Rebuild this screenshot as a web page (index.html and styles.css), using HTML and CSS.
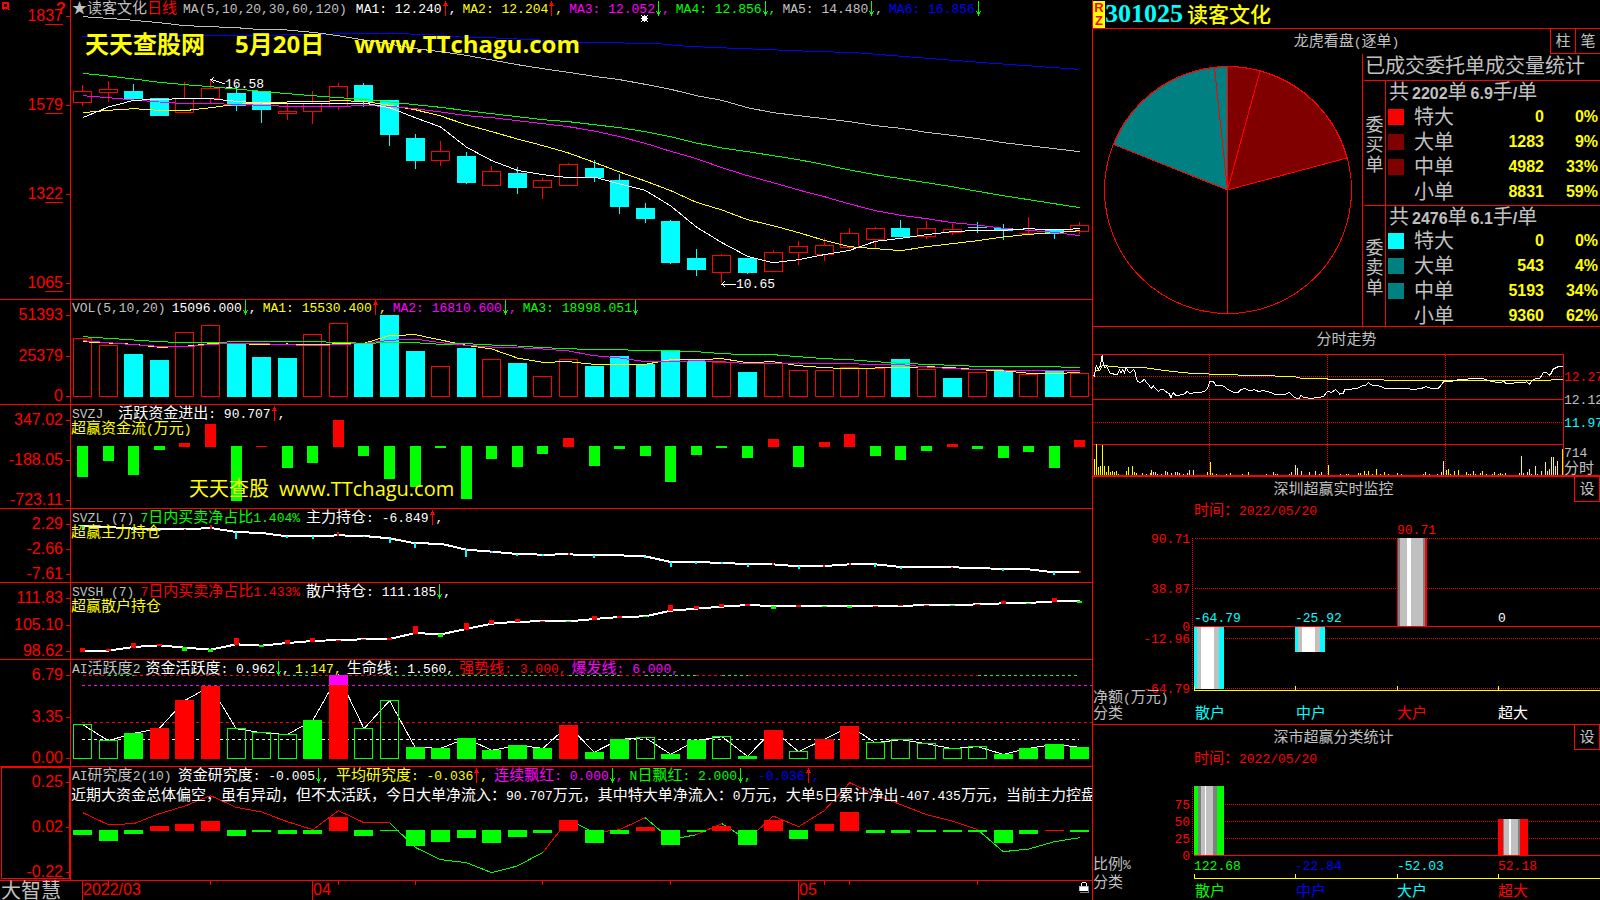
FILE: index.html
```html
<!DOCTYPE html>
<html lang="zh-CN">
<head>
    <meta charset="UTF-8">
    <meta name="viewport" content="width=device-width, initial-scale=1.0">
    <title>读客文化 301025 日线</title>
    <link rel="stylesheet" href="styles.css">
</head>
<body>
    <svg class="symbols" aria-hidden="true">
        <symbol id="up" viewBox="0 0 7 15"><path d="M3 0h1v15h-1zM2 2h3v2h-3zM1 4h5v1h-5z"/></symbol>
        <symbol id="down" viewBox="0 0 7 15"><path d="M3 0h1v15h-1zM2 11h3v2h-3zM1 10h1v1h-1zM5 10h1v1h-1z"/></symbol>
    </svg>

    <div class="terminal">
        <!-- 左侧: K线和指标 -->
        <main class="charts">
            <section class="panel kline">
                <div class="axis">
                    <svg class="pin" viewBox="0 0 8 8"><path d="M0 0h7v7h1v1h-2v-1h-4v1h-1v-1h-1zM2 2v3h3v-3z"/></svg>
                    <b class="help">?</b>
                    <span>18<u>37</u></span><span>15<u>79</u></span><span>13<u>22</u></span><span>10<u>65</u></span>
                </div>
                <div class="plot">
                    <svg id="kline" viewBox="0 0 1021 897" preserveAspectRatio="none"></svg>
                    <div class="readout">
                        <span class="grey">★读客文化<em class="red">日线</em></span>
                        <span class="grey title num">MA(5,10,20,30,60,120)</span>
                        <span class="white num">MA1: 12.240<svg class="arrow up"><use href="#up"/></svg>,</span>
                        <span class="yellow num">MA2: 12.204<svg class="arrow up"><use href="#up"/></svg>,</span>
                        <span class="magenta num">MA3: 12.052<svg class="arrow down"><use href="#down"/></svg>,</span>
                        <span class="green num">MA4: 12.856<svg class="arrow down"><use href="#down"/></svg>,</span>
                        <span class="grey num">MA5: 14.480<svg class="arrow down"><use href="#down"/></svg>,</span>
                        <span class="blue num">MA6: 16.856<svg class="arrow down"><use href="#down"/></svg></span>
                    </div>
                    <svg class="star" viewBox="0 0 7 7"><path d="M1 1h5v5h-5zM0 0h1v1h-1zM6 0h1v1h-1zM0 6h1v1h-1zM6 6h1v1h-1zM3 0h1v7h-1zM0 3h7v1h-7z"/></svg>
                    <div class="watermark big"><span>天天查股网</span><span>5月20日</span><span>www.TTchagu.com</span></div>
                    <div class="mark high"><svg viewBox="0 0 15 8"><path d="M0 2L15 7M1 3L4 0M1 3L4 6"/></svg>16.58</div>
                    <div class="mark low"><svg viewBox="0 0 15 8"><path d="M0 4H15M1 4L4 1M1 4L4 7"/></svg>10.65</div>
                </div>
            </section>

            <section class="panel">
                <div class="axis"><span>51393</span><span>25379</span><span>0</span></div>
                <div class="plot">
                    <svg id="vol" viewBox="0 30 1021 312" preserveAspectRatio="none"></svg>
                    <div class="readout latin num">
                        <span class="grey">VOL(5,10,20)</span>
                        <span class="white">15096.000<svg class="arrow down"><use href="#down"/></svg>,</span>
                        <span class="yellow">MA1: 15530.400<svg class="arrow up"><use href="#up"/></svg>,</span>
                        <span class="magenta">MA2: 16810.600<svg class="arrow down"><use href="#down"/></svg>,</span>
                        <span class="green">MA3: 18998.051<svg class="arrow down"><use href="#down"/></svg></span>
                    </div>
                </div>
            </section>

            <section class="panel">
                <div class="axis"><span>347.02</span><span>-188.05</span><span>-723.11</span></div>
                <div class="plot">
                    <svg id="svzj" viewBox="0 345 1021 309" preserveAspectRatio="none"></svg>
                    <div class="readout">
                        <span class="grey wide num">SVZJ</span>
                        <span class="white">活跃资金进出<i class="num">: 90.707<svg class="arrow up"><use href="#up"/></svg>,</i></span>
                    </div>
                    <p class="note yellow">超赢资金流<i class="num">(</i>万元<i class="num">)</i></p>
                    <div class="watermark small"><span>天天查股</span><span>www.TTchagu.com</span></div>
                </div>
            </section>

            <section class="panel">
                <div class="axis"><span>2.29</span><span>-2.66</span><span>-7.61</span></div>
                <div class="plot">
                    <svg id="svzl" viewBox="0 657 1021 219" preserveAspectRatio="none"></svg>
                    <div class="readout">
                        <span class="grey num">SVZL (7)</span>
                        <span class="green"><i class="num">7</i>日内买卖净占比<i class="num">1.404%</i></span>
                        <span class="white">主力持仓<i class="num">: -6.849<svg class="arrow up"><use href="#up"/></svg>,</i></span>
                    </div>
                    <p class="note yellow">超赢主力持仓</p>
                </div>
            </section>

            <section class="panel">
                <div class="axis"><span>111.83</span><span>105.10</span><span>98.62</span></div>
                <div class="plot">
                    <svg id="svsh" viewBox="0 39 1021 228" preserveAspectRatio="none"></svg>
                    <div class="readout">
                        <span class="grey num">SVSH (7)</span>
                        <span class="red"><i class="num">7</i>日内买卖净占比<i class="num">1.433%</i></span>
                        <span class="white">散户持仓<i class="num">: 111.185<svg class="arrow down"><use href="#down"/></svg>,</i></span>
                    </div>
                    <p class="note yellow">超赢散户持仓</p>
                </div>
            </section>

            <section class="panel">
                <div class="axis"><span>6.79</span><span>3.35</span><span>0.00</span></div>
                <div class="plot">
                    <svg id="active" viewBox="0 270 1021 318" preserveAspectRatio="none"></svg>
                    <div class="readout tight">
                        <span class="grey"><i class="num">AI</i>活跃度<i class="num">2</i></span>
                        <span class="white">资金活跃度<i class="num">: 0.962<svg class="arrow down"><use href="#down"/></svg>,</i></span>
                        <span class="yellow num">1.147,</span>
                        <span class="white">生命线<i class="num">: 1.560,</i></span>
                        <span class="red">强势线<i class="num">: 3.000,</i></span>
                        <span class="magenta">爆发线<i class="num">: 6.000,</i></span>
                    </div>
                </div>
            </section>

            <section class="panel selected">
                <div class="axis"><span>0.25</span><span>0.02</span><span>-0.22</span></div>
                <div class="plot">
                    <svg id="research" viewBox="0 591 1021 339" preserveAspectRatio="none"></svg>
                    <div class="readout">
                        <span class="grey"><i class="num">AI</i>研究度<i class="num">2(10)</i></span>
                        <span class="white">资金研究度<i class="num">: -0.005<svg class="arrow down"><use href="#down"/></svg>,</i></span>
                        <span class="yellow">平均研究度<i class="num">: -0.036<svg class="arrow up"><use href="#up"/></svg>,</i></span>
                        <span class="magenta">连续飘红<i class="num">: 0.000<svg class="arrow down"><use href="#down"/></svg>,</i></span>
                        <span class="green"><i class="num">N</i>日飘红<i class="num">: 2.000<svg class="arrow down"><use href="#down"/></svg>,</i></span>
                        <span class="blue num">-0.036<svg class="arrow up"><use href="#up"/></svg>,</span>
                    </div>
                    <p class="note comment white">近期大资金总体偏空，虽有异动，但不太活跃，今日大单净流入：<i class="num">90.707</i>万元，其中特大单净流入：<i class="num">0</i>万元，大单<i class="num">5</i>日累计净出<i class="num">-407.435</i>万元，当前主力控盘</p>
                </div>
            </section>

            <footer class="timeline">
                <div class="brand">大智慧</div>
                <div class="plot">
                    <svg id="ticks" viewBox="0 0 1021 19" preserveAspectRatio="none"></svg>
                    <span class="month march">2022/03</span>
                    <span class="month april">04</span>
                    <span class="month may">05</span>
                    <svg class="lock" viewBox="0 0 10 12"><path fill="#fff" d="M3 0h4v1h-4zM2 1h1v3h-1zM7 1h1v3h-1zM1 4h8v5h-8z"/><path fill="#c0c0c0" d="M0 4h9v1h-9zM0 4h1v5h-1z"/><path fill="#808080" d="M9 4h1v7h-9v-1h8z"/></svg>
                </div>
            </footer>
        </main>

        <!-- 右侧: 个股信息 -->
        <aside class="side">
            <header class="stock">
                <span class="badge"><b>R</b><b>Z</b></span>
                <span class="code">301025</span>
                <h1 class="name">读客文化</h1>
            </header>

            <section class="orders">
                <div class="bar">
                    <h2>龙虎看盘<i class="num">(</i>逐单<i class="num">)</i></h2>
                    <div class="switch"><button type="button">柱</button><button type="button">笔</button></div>
                </div>
                <div class="body">
                    <svg class="pie" viewBox="1093 54 269 272">
                        <path class="buy" d="M1227.5 190V66.5A123.5 123.5 0 0 1 1260 71Z"/>
                        <path class="buy" d="M1227.5 190L1260 71A123.5 123.5 0 0 1 1347 158Z"/>
                        <path class="sell" d="M1227.5 190L1113.5 144.5A123.5 123.5 0 0 1 1214.5 67.5Z"/>
                        <path class="sell" d="M1227.5 190L1214.5 67.5A123.5 123.5 0 0 1 1227.5 66.5Z"/>
                        <circle cx="1228" cy="190" r="123.5"/>
                        <path d="M1227.5 66V314"/>
                    </svg>
                    <div class="stats">
                        <h3>已成交委托单成交量统计</h3>
                        <div class="group">
                            <div class="kind"><span>委</span><span>买</span><span>单</span></div>
                            <table>
                                <caption>共<i>2202</i>单<i>6.9</i>手<i class="slash">/</i>单</caption>
                                <tr><th scope="row"><span class="swatch" data-fill="b0"></span>特大</th><td>0</td><td>0%</td></tr>
                                <tr><th scope="row"><span class="swatch" data-fill="b1"></span>大单</th><td>1283</td><td>9%</td></tr>
                                <tr><th scope="row"><span class="swatch" data-fill="b1"></span>中单</th><td>4982</td><td>33%</td></tr>
                                <tr><th scope="row"><span class="swatch"></span>小单</th><td>8831</td><td>59%</td></tr>
                            </table>
                        </div>
                        <div class="group">
                            <div class="kind"><span>委</span><span>卖</span><span>单</span></div>
                            <table>
                                <caption>共<i>2476</i>单<i>6.1</i>手<i class="slash">/</i>单</caption>
                                <tr><th scope="row"><span class="swatch" data-fill="s0"></span>特大</th><td>0</td><td>0%</td></tr>
                                <tr><th scope="row"><span class="swatch" data-fill="s1"></span>大单</th><td>543</td><td>4%</td></tr>
                                <tr><th scope="row"><span class="swatch" data-fill="s1"></span>中单</th><td>5193</td><td>34%</td></tr>
                                <tr><th scope="row"><span class="swatch"></span>小单</th><td>9360</td><td>62%</td></tr>
                            </table>
                        </div>
                    </div>
                </div>
            </section>

            <section class="intraday">
                <h2>分时走势</h2>
                <div class="body">
                    <svg id="minute" viewBox="24 102 1410 363" preserveAspectRatio="none"></svg>
                    <div class="prices num">
                        <span class="red">12.27</span><span class="grey">12.12</span><span class="cyan">11.97</span>
                        <div class="grey"><span>714</span><span class="zh">分时</span></div>
                    </div>
                </div>
            </section>

            <section class="monitor">
                <div class="bar">
                    <h2>深圳超赢实时监控</h2>
                    <button type="button">设</button>
                </div>
                <p class="date red">时间：<i class="num">2022/05/20</i></p>
                <svg class="bars" viewBox="1093 519 507 205">
                    <path class="dots" d="M1195 538.5H1600M1195 588.5H1600M1195 638.5H1600M1195 688.5H1600M1192.5 538V689"/>
                    <path class="zero" d="M1194 626.5H1600"/>
                    <g class="red" text-anchor="end">
                        <text x="1190" y="543">90.71</text><text x="1190" y="593">38.87</text><text x="1190" y="631">0</text>
                        <text x="1190" y="643">-12.96</text><text x="1190" y="693">-64.79</text>
                    </g>
                    <g>
                        <path fill="#0ff" d="M1194 627h30v62h-30z"/><path fill="#c0c0c0" d="M1197 627h22v62h-22z"/><path fill="#fff" d="M1201 627h13v62h-13z"/>
                        <path fill="#0ff" d="M1295 627h30v25h-30z"/><path fill="#c0c0c0" d="M1298 627h22v25h-22z"/><path fill="#fff" d="M1302 627h13v25h-13z"/>
                        <path fill="#f00" d="M1397 538h30v88h-30z"/><path fill="#808080" d="M1398 538h27v88h-27z"/><path fill="#c0c0c0" d="M1400 538h23v88h-23z"/><path fill="#fff" d="M1407 538h4v88h-4z"/>
                    </g>
                    <path class="base" d="M1194 690.5H1600M1194.5 686V691M1295.5 686V691M1397.5 686V691M1498.5 686V691"/>
                    <g class="cyan"><text x="1194" y="622">-64.79</text><text x="1295" y="622">-25.92</text></g>
                    <text class="red" x="1397" y="534">90.71</text>
                    <text class="white" x="1498" y="622">0</text>
                    <g class="zh">
                        <text class="cyan" x="1195" y="718">散户</text><text class="cyan" x="1296" y="718">中户</text>
                        <text class="red" x="1397" y="718">大户</text><text class="white" x="1498" y="718">超大</text>
                        <text class="grey" x="1093" y="702">净额<tspan class="num">(</tspan>万元<tspan class="num">)</tspan></text>
                        <text class="grey" x="1093" y="718">分类</text>
                    </g>
                </svg>
            </section>

            <section class="monitor">
                <div class="bar">
                    <h2>深市超赢分类统计</h2>
                    <button type="button">设</button>
                </div>
                <p class="date red">时间：<i class="num">2022/05/20</i></p>
                <svg class="bars" viewBox="1093 767 507 133">
                    <path class="dots" d="M1195 804.5H1600M1195 821.5H1600M1195 838.5H1600M1192.5 787V855"/>
                    <path class="zero" d="M1194 855.5H1600"/>
                    <g class="red" text-anchor="end">
                        <text x="1190" y="809">75</text><text x="1190" y="826">50</text><text x="1190" y="843">25</text><text x="1190" y="860">0</text>
                    </g>
                    <g>
                        <path fill="#0f0" d="M1194 786h30v69h-30z"/><path fill="#808080" d="M1198 786h19v69h-19z"/><path fill="#c0c0c0" d="M1201 786h12v69h-12z"/><path fill="#fff" d="M1205 786h1v69h-1z"/>
                        <path fill="#f00" d="M1498 819h30v36h-30z"/><path fill="#808080" d="M1503 819h17v36h-17z"/><path fill="#c0c0c0" d="M1504 819h14v36h-14z"/><path fill="#fff" d="M1509 819h2v36h-2z"/>
                    </g>
                    <path class="base" d="M1194 878.5H1600M1194.5 874V879M1295.5 874V879M1397.5 874V879M1498.5 874V879"/>
                    <text class="green" x="1194" y="870">122.68</text><text class="blue" x="1295" y="870">-22.84</text>
                    <text class="cyan" x="1397" y="870">-52.03</text><text class="red" x="1498" y="870">52.18</text>
                    <g class="zh">
                        <text class="green" x="1195" y="896">散户</text><text class="blue" x="1296" y="896">中户</text>
                        <text class="cyan" x="1397" y="896">大户</text><text class="red" x="1498" y="896">超大</text>
                        <text class="grey" x="1093" y="869">比例<tspan class="num">%</tspan></text>
                        <text class="grey" x="1093" y="887">分类</text>
                    </g>
                </svg>
            </section>
        </aside>
    </div>

    <script src="charts.js"></script>
</body>
</html>
```
FILE: styles.css
```css
* {
    box-sizing: border-box;
}
body {
    margin: 0;
    background: #000;
    color: #c0c0c0;
    font: 15px/15px "Noto Sans CJK SC", sans-serif;
    overflow: hidden;
}
h1, h2, h3, p {
    margin: 0;
    font-weight: normal;
}
i, em {
    font-style: normal;
}
button {
    width: 25px;
    height: 25px;
    padding: 0 0 3px;
    border: 0 solid #f00;
    border-left-width: 1px;
    border-bottom-width: 1px;
    background: #000;
    color: #c0c0c0;
    font: inherit;
}
.num {
    font-family: "Liberation Mono", monospace;
    font-size: 13px;
}
.zh {
    font-family: "Noto Sans CJK SC", sans-serif;
    font-size: 15px;
}
.red { color: #f00; fill: #f00; }
.green { color: #0f0; fill: #0f0; }
.blue { color: #00f; fill: #00f; }
.cyan { color: #0ff; fill: #0ff; }
.yellow { color: #ff0; fill: #ff0; }
.magenta { color: #f0f; fill: #f0f; }
.white { color: #fff; fill: #fff; }
.grey { color: #c0c0c0; fill: #c0c0c0; }
.symbols {
    position: absolute;
    width: 0;
    height: 0;
}

.terminal {
    display: grid;
    grid-template-columns: minmax(0, 1092fr) minmax(0, 508fr);
    height: 100vh;
}

/* 左侧 */
.charts {
    display: grid;
    grid-template-columns: minmax(0, 1fr);
    grid-template-rows: 300fr 105fr 104fr 74fr 77fr 107fr 114fr 19fr;
}
.panel {
    display: flex;
    min-height: 0;
    border-bottom: 1px solid #f00;
}
.axis {
    position: relative;
    display: flex;
    flex-direction: column;
    justify-content: space-between;
    flex: 0 0 71px;
    padding: 8px 7px 1px 0;
    border-right: 1px solid #f00;
    color: #f00;
    font: 16px/14px "Liberation Sans", sans-serif;
    text-align: right;
}
.axis span {
    position: relative;
}
.axis span::after {
    content: "";
    position: absolute;
    top: 7px;
    right: -7px;
    width: 4px;
    height: 1px;
    background: #f00;
}
.axis u {
    text-decoration-thickness: 1px;
    text-underline-offset: 3px;
}
.kline .axis {
    padding: 9px 7px 9px 0;
}
.selected .axis::before {
    content: "";
    position: absolute;
    inset: 0 0 1px 1px;
    border: 1px solid #f00;
}
.pin {
    position: absolute;
    top: 2px;
    left: 2px;
    width: 8px;
    height: 8px;
    fill: #f00;
}
.help {
    position: absolute;
    top: 2px;
    left: 56px;
}
.plot {
    position: relative;
    flex: 1;
    min-width: 0;
    overflow: hidden;
}
.plot > svg[id] {
    position: absolute;
    width: 100%;
    height: 100%;
    shape-rendering: crispEdges;
}
.plot > svg[id] * {
    vector-effect: non-scaling-stroke;
}
.readout {
    position: relative;
    display: flex;
    align-items: baseline;
    gap: 6px;
    height: 15px;
    padding-left: 1px;
    line-height: 13px;
    white-space: pre;
}
.readout.latin {
    line-height: 17px;
}
.readout.tight {
    gap: 5px;
}
.readout .title {
    margin-right: 3px;
}
.readout .wide {
    margin-right: 9px;
}
.arrow {
    width: 7px;
    height: 15px;
    vertical-align: 1px;
    margin: -4px 0;
    shape-rendering: crispEdges;
}
.arrow.up { fill: #f00; }
.arrow.down { fill: #0f0; }
.note {
    position: relative;
    line-height: 13px;
    white-space: nowrap;
}
.comment {
    margin-top: 5px;
}
.star {
    position: absolute;
    top: 15px;
    left: 570px;
    width: 7px;
    height: 7px;
    fill: #fff;
}
.watermark {
    position: absolute;
    display: flex;
    color: #ff0;
    white-space: nowrap;
}
.watermark.big {
    top: 29px;
    left: 14px;
    gap: 30px;
    font: bold 24px/30px "Open Sans", "Noto Sans CJK SC", sans-serif;
}
.watermark.small {
    top: 69px;
    left: 118px;
    gap: 10px;
    font: 20px/30px "Open Sans", "Noto Sans CJK SC", sans-serif;
}
.mark {
    position: absolute;
    display: flex;
    color: #fff;
    font: 13px/15px "Liberation Mono", monospace;
}
.mark svg {
    width: 15px;
    height: 8px;
    fill: none;
    stroke: #fff;
    shape-rendering: crispEdges;
}
.mark.high {
    top: 77px;
    left: 139px;
}
.mark.low {
    top: 277px;
    left: 650px;
}
.mark.low svg {
    margin-top: 3px;
}
.timeline {
    display: flex;
    min-height: 0;
}
.brand {
    flex: 0 0 71px;
    padding-left: 1px;
    font-size: 20px;
    line-height: 17px;
}
.month {
    position: absolute;
    color: #f00;
    font: 16px/18px "Liberation Sans", sans-serif;
}
.march { left: 12px; }
.april { left: 242px; }
.may { left: 728px; }
.lock {
    position: absolute;
    top: 1px;
    right: 3px;
    width: 10px;
    height: 12px;
}

/* 右侧 */
.side {
    display: grid;
    grid-template-columns: minmax(0, 1fr);
    grid-template-rows: 29fr 298fr 150fr 248fr 175fr;
    border-left: 1px solid #f00;
    overflow: hidden;
}
.side > * {
    min-height: 0;
    border-bottom: 1px solid #f00;
}
.side > :last-child {
    border-bottom: 0;
}
.side h2 {
    font-size: 15px;
    text-align: center;
}
.side .bar {
    flex: none;
    height: 25px;
    line-height: 22px;
}
.stock {
    display: flex;
    align-items: center;
}
.badge {
    display: flex;
    flex-direction: column;
    width: 12px;
    height: 27px;
    background: #ff0;
    color: #f00;
    font: 13px/13px "Liberation Sans", sans-serif;
    text-align: center;
}
.code {
    color: #0ff;
    font: bold 26px/28px "Liberation Serif", serif;
}
.name {
    margin: 0 0 2px 4px;
    color: #ff0;
    font-size: 21px;
    font-weight: 500;
    line-height: 26px;
}
.orders {
    display: flex;
    flex-direction: column;
}
.orders .bar {
    display: grid;
    grid-template-columns: 50px 1fr 50px;
}
.orders h2 {
    grid-column: 2;
}
.switch {
    display: flex;
}
.orders .body {
    display: flex;
    flex: 1;
    min-height: 0;
}
.pie {
    flex: 1;
    min-width: 0;
    fill: none;
    stroke: #f00;
    shape-rendering: crispEdges;
}
.pie .buy { fill: #800000; }
.pie .sell { fill: #008080; }
.stats {
    display: flex;
    flex-direction: column;
    flex: 0 0 238px;
    min-height: 0;
    border-left: 1px solid #f00;
}
.stats h3 {
    height: 26px;
    padding-left: 2px;
    font-size: 20px;
    line-height: 22px;
    white-space: nowrap;
}
.group {
    display: flex;
    flex: 125 1 0;
    min-height: 0;
    margin-left: 1px;
    border-top: 1px solid #f00;
}
.group + .group {
    flex-grow: 121;
}
.kind {
    display: flex;
    flex-direction: column;
    justify-content: center;
    width: 22px;
    border-right: 1px solid #f00;
    font-size: 18px;
    line-height: 20px;
    text-align: center;
}
.group table {
    flex: 1;
    align-self: flex-start;
    border-collapse: collapse;
    color: #ff0;
    font-family: "Liberation Sans", sans-serif;
    font-size: 16px;
    font-weight: bold;
    line-height: 20px;
}
.group caption,
.group th {
    color: #c0c0c0;
    font-family: "Noto Sans CJK SC", sans-serif;
    font-size: 20px;
    font-weight: normal;
    text-align: left;
    white-space: nowrap;
}
.group caption {
    height: 23px;
    padding-left: 3px;
}
.group caption i {
    margin: 0 0 0 3px;
    font-family: "Liberation Sans", sans-serif;
    font-size: 16px;
    font-weight: bold;
}
.group caption .slash {
    margin: 0;
}
.group tr {
    height: 25px;
}
.group th,
.group td {
    padding: 0;
}
.group th {
    padding-bottom: 2px;
}
.group td {
    text-align: right;
}
.group td:nth-child(3) {
    width: 56px;
    padding-right: 2px;
}
.swatch {
    display: inline-block;
    width: 16px;
    height: 16px;
    margin: 0 10px 0 2px;
    vertical-align: -1px;
}
.swatch[data-fill=b0] { background: #f00; }
.swatch[data-fill=b1] { background: #800000; }
.swatch[data-fill=s0] { background: #0ff; }
.swatch[data-fill=s1] { background: #008080; }

.intraday {
    display: flex;
    flex-direction: column;
    border-bottom-width: 2px;
}
.intraday h2 {
    height: 27px;
    line-height: 22px;
}
.intraday .body {
    display: flex;
    flex: 1;
    min-height: 0;
}
#minute {
    flex: 1;
    min-width: 0;
    height: 100%;
    shape-rendering: crispEdges;
}
#minute * {
    vector-effect: non-scaling-stroke;
}
.prices {
    flex: 0 0 37px;
    min-width: 0;
    padding-top: 12px;
    border-left: 1px solid #f00;
    line-height: 23px;
}
.prices span {
    display: block;
    white-space: nowrap;
}
.prices div {
    margin-top: 12px;
    line-height: 13px;
}

.monitor {
    display: flex;
    flex-direction: column;
}
.monitor .bar {
    display: flex;
}
.monitor h2 {
    flex: 1;
}
.monitor button {
    width: 26px;
    border-right-width: 1px;
}
.date {
    flex: none;
    height: 17px;
    padding-left: 101px;
    line-height: 14px;
}
.bars {
    flex: 1;
    min-height: 0;
    width: 100%;
    font: 13px "Liberation Mono", monospace;
    shape-rendering: crispEdges;
}
.dots {
    stroke: #f00;
    stroke-dasharray: 1 1;
}
.zero { stroke: #f00; }
.base { stroke: #ff0; }
```
FILE: charts.js
```js
const NS = 'http://www.w3.org/2000/svg';
const RED = '#f00', GREEN = '#0f0', CYAN = '#0ff', WHITE = '#fff', YELLOW = '#ff0', MAGENTA = '#f0f';

// 第 i 根K线的中心
const cx = i => 11.7 + 25.57 * i;
// 每个像素占 3 个单位
const snap = y => Math.floor(y / 3) * 3 + 1.5;

function add(id, tag, attrs) {
    const el = document.createElementNS(NS, tag);
    for (const key in attrs) el.setAttribute(key, attrs[key]);
    document.getElementById(id).appendChild(el);
}

function solid(id, i, top, bottom, width, color) {
    add(id, 'rect', { x: Math.round(cx(i) - width / 2), y: top, width: width, height: Math.max(bottom - top, 3), fill: color });
}

function hollow(id, i, top, bottom, color) {
    const y = snap(top);
    add(id, 'rect', { x: Math.round(cx(i) - 9.5) + 0.5, y: y, width: 18, height: Math.max(snap(bottom) - y, 0.1), fill: 'none', stroke: color });
}

function line(id, ys, color, width, from) {
    const points = ys.map((y, k) => cx(k + (from || 0)) + ',' + (y + 1)).join(' ');
    add(id, 'polyline', { points: points, fill: 'none', stroke: color, 'stroke-width': width || 1 });
}

function segment(id, x1, y1, x2, y2, color, dash) {
    add(id, 'line', { x1: x1, y1: y1, x2: x2, y2: y2, stroke: color, 'stroke-dasharray': dash || 'none' });
}

// K线: [涨跌, 最高, 上沿, 下沿, 最低]
const candles = [
    ['r', 255, 273, 308, 318], ['r', 243, 268, 277, 306], ['c', 251, 273, 297, 300], ['c', 293, 293, 348, 348],
    ['r', 246, 295, 338, 338], ['r', 238, 265, 295, 310], ['c', 255, 279, 318, 333], ['c', 272, 273, 330, 369],
    ['r', 310, 333, 341, 360], ['r', 273, 311, 335, 372], ['r', 249, 259, 318, 330], ['c', 249, 255, 305, 321],
    ['c', 300, 300, 405, 438], ['c', 402, 414, 483, 507], ['r', 423, 454, 482, 498], ['c', 456, 468, 549, 552],
    ['r', 498, 514, 557, 557], ['c', 501, 519, 564, 582], ['r', 534, 541, 563, 597], ['r', 489, 493, 557, 557],
    ['c', 480, 504, 534, 546], ['c', 522, 540, 621, 642], ['c', 609, 624, 657, 669], ['c', 660, 663, 789, 792],
    ['c', 747, 774, 810, 828], ['r', 762, 766, 818, 849], ['c', 774, 774, 819, 822], ['r', 750, 757, 815, 815],
    ['r', 723, 739, 758, 795], ['r', 714, 736, 763, 783], ['r', 684, 700, 743, 747], ['r', 681, 685, 719, 744],
    ['c', 660, 684, 711, 711], ['r', 663, 685, 710, 717], ['r', 672, 688, 697, 705], ['c', 666, 681, 684, 699],
    ['c', 672, 684, 693, 720], ['r', 651, 699, 699, 701], ['c', 687, 690, 702, 717], ['r', 666, 676, 695, 702]
];
candles.forEach(([dir, high, top, bottom, low], i) => {
    const x = Math.round(cx(i) - 9.5) + 9.5;
    const color = dir === 'r' ? RED : CYAN;
    segment('kline', x, high, x, top, color);
    segment('kline', x, bottom, x, low, color);
    if (dir === 'r') hollow('kline', i, top, bottom, RED);
    else solid('kline', i, top, bottom, 19, CYAN);
});

// 均线
add('kline', 'polyline', {
    points: '11,109 165,106 190,106 227,104 281,101 329,101 358,104 390,111 418,113 469,120 512,127 536,128 587,131 617,139 639,142 690,148 740,154 785,158 848,173 912,188 951,196 1008,208',
    fill: 'none', stroke: '#00f'
});
line('kline', [49, 54, 60, 67, 76, 79, 82, 88, 89, 96, 106, 119, 131, 145, 154, 165, 179, 193, 205, 216, 228, 238, 252, 267, 286, 300, 322, 337, 346, 355, 364, 376, 384, 396, 405, 415, 427, 436, 445, 454], '#c0c0c0');
line('kline', [219, 227, 236, 246, 253, 259, 266, 273, 280, 286, 292, 297, 305, 313, 321, 331, 340, 349, 358, 364, 373, 382, 394, 409, 428, 443, 454, 466, 478, 493, 509, 523, 535, 547, 559, 573, 586, 598, 610, 622], GREEN);
line('kline', [337, 330, 325, 330, 331, 322, 312, 308, 305, 304, 301, 303, 315, 328, 347, 373, 394, 416, 436, 458, 486, 515, 542, 571, 606, 629, 658, 676, 697, 720, 739, 745, 751, 739, 730, 721, 710, 702, 697, 691], YELLOW);
line('kline', [286, 292, 299, 305, 310, 310, 312, 315, 318, 318, 318, 316, 318, 325, 335, 346, 352, 361, 370, 379, 392, 409, 429, 453, 475, 502, 526, 547, 569, 589, 611, 631, 645, 655, 667, 674, 684, 690, 696, 706], MAGENTA);
line('kline', [352, 320, 300, 297, 295, 295, 303, 308, 310, 310, 310, 308, 322, 352, 380, 440, 481, 510, 523, 532, 530, 551, 570, 617, 680, 727, 768, 787, 778, 763, 750, 723, 714, 703, 694, 690, 690, 685, 689, 685], WHITE);

// 成交量
const volume = [145, 166, 192, 210, 127, 106, 159, 201, 204, 133, 100, 159, 75, 183, 229, 174, 208, 219, 259, 208, 228, 198, 222, 180, 213, 217, 246, 220, 241, 241, 232, 234, 207, 238, 264, 247, 243, 253, 243, 250];
const volumeUp = [0, 1, 4, 5, 9, 10, 14, 16, 18, 19, 25, 27, 28, 29, 30, 31, 33, 35, 37, 39];
volume.forEach((top, i) => {
    if (volumeUp.includes(i)) hollow('vol', i, top, 319, RED);
    else solid('vol', i, top, 321, 19, CYAN);
});
line('vol', [154, 158, 162, 171, 168, 160, 160, 162, 161, 164, 160, 159, 136, 133, 149, 165, 176, 203, 216, 214, 222, 222, 222, 208, 208, 205, 217, 214, 226, 232, 235, 233, 232, 229, 232, 238, 241, 249, 249, 247], YELLOW);
line('vol', [151, 157, 163, 168, 170, 162, 159, 160, 163, 166, 163, 159, 150, 146, 157, 165, 170, 172, 176, 182, 196, 203, 214, 214, 211, 214, 220, 220, 218, 220, 220, 223, 223, 230, 235, 238, 239, 241, 241, 241], MAGENTA);
line('vol', [139, 144, 149, 154, 157, 157, 154, 154, 154, 154, 156, 159, 157, 157, 162, 160, 164, 167, 172, 175, 178, 178, 181, 181, 184, 190, 193, 193, 199, 205, 208, 214, 219, 222, 225, 228, 229, 229, 229, 233], GREEN);

// 零轴上方红色, 下方绿色
function flow(id, values, zero, width) {
    values.forEach((y, i) => {
        if (y <= zero) solid(id, i, y, zero + 3, width, RED);
        else solid(id, i, zero, y, width, GREEN);
    });
}
flow('svzj', [561, 513, 555, 480, 459, 402, 633, 468, 534, 519, 390, 498, 567, 591, 474, 627, 507, 531, 492, 444, 528, 477, 498, 576, 495, 474, 504, 447, 531, 456, 432, 498, 510, 483, 462, 477, 504, 486, 534, 450], 468, 11);

// 持仓曲线, marks: 序号 -> 长度, 向上为负
function holding(id, ys, marks, width, down) {
    line(id, ys, WHITE, 2);
    for (const i in marks) {
        const len = marks[i];
        if (len < 0) solid(id, +i, ys[i] + len + 3, ys[i] + 3, width, RED);
        else solid(id, +i, ys[i], ys[i] + len, width, down);
    }
}
holding('svzl',
    [708, 710, 715, 717, 717, 713, 725, 728, 738, 738, 735, 737, 744, 759, 760, 778, 784, 791, 793, 792, 795, 795, 798, 815, 816, 817, 822, 822, 828, 827, 822, 822, 830, 831, 831, 833, 836, 837, 846, 846],
    { 0: 9, 1: 6, 2: 8, 3: 6, 4: -3, 5: -12, 6: 22, 8: 6, 9: 9, 10: -12, 11: 4, 12: 15, 13: 15, 15: 23, 16: 5, 17: 6, 18: 5, 19: -6, 20: 9, 22: 6, 23: 16, 24: 6, 25: 5, 26: 9, 27: -6, 28: 9, 29: -5, 30: -6, 31: 9, 32: 7, 34: -3, 36: 8, 38: 9, 39: -6 },
    2, CYAN);
holding('svsh',
    [242, 241, 230, 225, 232, 238, 222, 226, 218, 212, 209, 207, 206, 188, 192, 176, 160, 154, 153, 153, 146, 140, 138, 121, 115, 109, 104, 107, 107, 107, 107, 107, 106, 105, 105, 102, 99, 98, 93, 93],
    { 0: -11, 1: -6, 2: -15, 3: -6, 4: 11, 5: 8, 6: -21, 7: 5, 8: -12, 9: -10, 10: -3, 11: -3, 12: -6, 13: -24, 14: 9, 15: -21, 16: -14, 17: -11, 18: -4, 19: 3, 20: -12, 21: -6, 22: 3, 23: -20, 24: -9, 25: -11, 26: -6, 27: 10, 28: -6, 29: 3, 30: 6, 31: -3, 32: -5, 33: -3, 34: 3, 35: -3, 36: -8, 37: 3, 38: -12, 39: 6 },
    5, GREEN);

// AI活跃度: 红柱 / 绿柱 / 空心
const activity = [
    ['o', 463], ['o', 511], ['g', 489], ['r', 474], ['r', 390], ['r', 348], ['o', 475], ['o', 487], ['o', 493], ['g', 450],
    ['r', 315], ['o', 475], ['o', 391], ['g', 531], ['g', 534], ['g', 504], ['g', 540], ['g', 525], ['g', 534], ['r', 465],
    ['g', 546], ['g', 507], ['o', 502], ['g', 552], ['g', 510], ['o', 499], ['g', 558], ['r', 480], ['o', 544], ['r', 507],
    ['r', 468], ['o', 517], ['o', 508], ['o', 520], ['o', 535], ['o', 529], ['g', 552], ['g', 534], ['g', 522], ['g', 531]
];
segment('active', 11, 508.5, 1008, 508.5, WHITE, '3 3');
segment('active', 11, 457.5, 1021, 457.5, RED, '3 3');
segment('active', 11, 346.5, 1021, 346.5, MAGENTA, '3 3');
[[0, 1, RED], [1, 2, GREEN], [2, 8, RED], [8, 9, GREEN], [9, 12, RED], [12, 18, GREEN], [18, 19, RED], [19, 21, GREEN], [21, 22, RED],
 [22, 24, GREEN], [24, 25, RED], [25, 26, GREEN], [26, 35, RED], [35, 39, GREEN]].forEach(([a, b, color]) => {
    segment('active', cx(a), 316.5, cx(b), 316.5, color, '3 3');
});
line('active', activity.map(a => a[1]), WHITE);
activity.forEach(([type, top], i) => {
    if (type === 'o') hollow('active', i, top, 565, GREEN);
    else solid('active', i, top, 567, 19, type === 'r' ? RED : GREEN);
});
solid('active', 10, 315, 345, 19, MAGENTA);

// AI研究度
line('research', [727, 763, 760, 730, 707, 676, 711, 725, 754, 778, 721, 757, 757], RED);
line('research', [757, 831, 868, 877, 907, 887, 846], GREEN, 1, 12);
line('research', [846, 748], RED, 1, 18);
line('research', [748, 787], GREEN, 1, 19);
line('research', [787, 778, 742], RED, 1, 20);
line('research', [742, 808, 793], GREEN, 1, 22);
line('research', [793, 760], RED, 1, 24);
line('research', [760, 809], GREEN, 1, 25);
line('research', [809, 737, 769, 721, 637, 674, 703, 733, 752, 778], RED, 1, 26);
line('research', [778, 844, 836, 814, 802], GREEN, 1, 35);
flow('research', [795, 813, 792, 768, 762, 753, 798, 786, 792, 792, 741, 798, 783, 828, 816, 804, 819, 801, 789, 750, 819, 792, 771, 825, 786, 768, 825, 750, 807, 762, 726, 789, 789, 786, 786, 786, 819, 792, 780, 786], 780, 19);

// 时间轴
[0, 9, 28].forEach(i => segment('ticks', Math.floor(cx(i)) + 0.5, 0, Math.floor(cx(i)) + 0.5, 19, RED));
[1, 5, 10, 13, 18, 23, 29, 30, 35].forEach(i => segment('ticks', Math.floor(cx(i)) + 0.5, 0, Math.floor(cx(i)) + 0.5, 4, RED));

// 分时走势
[103.5, 238.5, 373.5].forEach(y => segment('minute', 24, y, 1434, y, RED));
[169.5, 307.5].forEach(y => segment('minute', 24, y, 1434, y, RED, '1 1'));
[373.5, 727.5, 1081.5].forEach(x => segment('minute', x, 105, x, 465, RED, '1 1'));
[[28, 417], [34, 373], [40, 441], [46, 438], [52, 375], [58, 438], [64, 456], [70, 438], [76, 456], [82, 453], [88, 456], [94, 453], [100, 462],
 [124, 453], [130, 441], [142, 438], [148, 456], [154, 459], [172, 459], [184, 461], [196, 459], [199, 450], [205, 456], [211, 456], [217, 461],
 [229, 461], [241, 453], [247, 456], [259, 460], [271, 456], [277, 456], [283, 459], [295, 461], [307, 459], [313, 450], [325, 450], [367, 456],
 [376, 426], [382, 459], [394, 462], [424, 462], [436, 459], [472, 462], [490, 456], [544, 462], [565, 456], [571, 461], [577, 462], [613, 461],
 [619, 456], [631, 435], [637, 444], [649, 453], [673, 456], [691, 453], [703, 461], [709, 456], [730, 435], [766, 462], [784, 462], [790, 462],
 [820, 459], [826, 459], [838, 453], [844, 461], [850, 453], [862, 461], [874, 447], [886, 461], [898, 456], [910, 462], [937, 459], [949, 462],
 [1015, 461], [1021, 456], [1033, 462], [1057, 461], [1069, 456], [1075, 423], [1084, 450], [1090, 447], [1096, 461], [1108, 453], [1120, 450],
 [1144, 456], [1150, 462], [1156, 461], [1165, 453], [1171, 461], [1186, 459], [1192, 453], [1204, 461], [1222, 461], [1228, 456], [1240, 461],
 [1246, 459], [1252, 461], [1261, 459], [1303, 459], [1309, 408], [1315, 459], [1327, 456], [1333, 447], [1339, 461], [1351, 438], [1357, 461],
 [1369, 453], [1381, 426], [1387, 453], [1393, 447], [1399, 411], [1405, 411], [1411, 438], [1417, 423], [1432, 387]].forEach(([x, top]) => {
    segment('minute', snap(x), top, snap(x), 465, YELLOW);
});
add('minute', 'polyline', {
    points: '34,153 45,150 52,137 68,138 110,142 178,143 235,151 280,156 320,160 368,161 375,163 450,164 470,166 570,168 630,170 650,175 725,176 730,178 895,179 900,182 1395,182 1400,179 1434,177',
    fill: 'none', stroke: YELLOW
});
add('minute', 'polyline', {
    points: '24,166 28,168 31,150 34,137 40,148 45,140 49,120 52,104 55,135 60,145 65,138 70,150 76,160 82,160 90,165 96,164 103,150 108,158 113,150 118,158 124,142 130,155 137,158 145,148 150,155 153,170 158,185 165,187 172,184 178,178 184,187 192,195 198,205 205,198 212,206 220,214 228,208 236,209 244,216 252,220 258,233 264,218 272,225 285,225 298,222 306,214 314,221 328,218 345,217 360,214 368,205 375,184 385,185 392,195 405,195 418,200 428,208 445,216 460,216 468,208 480,206 495,213 508,209 520,214 535,212 552,216 568,222 583,224 600,223 614,217 628,232 642,237 648,225 656,233 680,235 700,232 715,230 727,214 740,217 752,209 764,222 775,220 780,207 800,207 818,205 835,196 842,197 850,188 860,195 880,197 900,205 930,207 960,206 990,208 1010,205 1022,200 1040,206 1058,206 1068,196 1076,185 1100,184 1120,179 1140,180 1160,174 1175,177 1195,176 1215,183 1240,188 1258,185 1264,192 1282,190 1300,187 1325,186 1334,192 1345,178 1365,175 1375,158 1385,159 1395,166 1405,147 1420,140 1434,140',
    fill: 'none', stroke: WHITE
});
```
